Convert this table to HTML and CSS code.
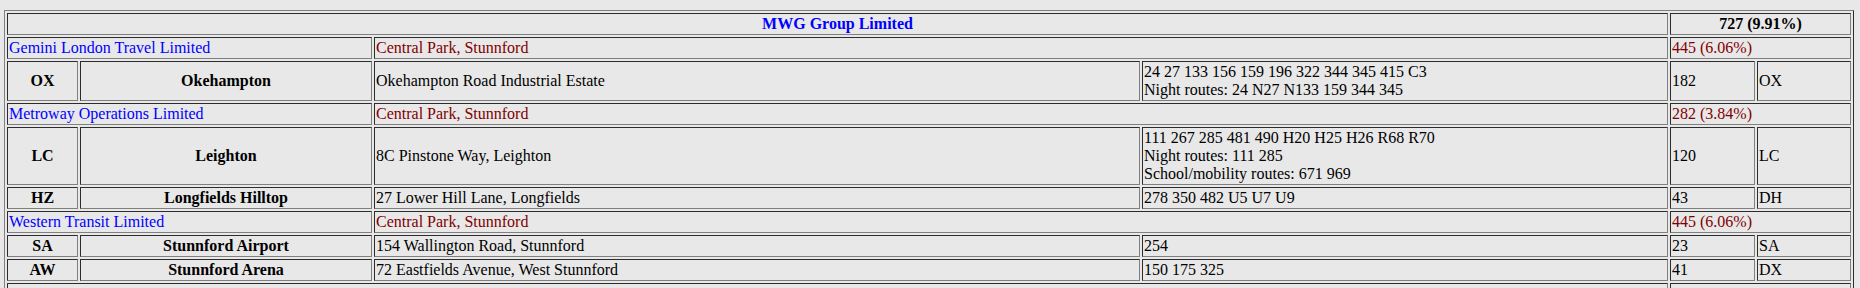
FILE: index.html
```html
<!DOCTYPE html>
<html>
<head>
<meta charset="utf-8">
<title>MWG Group Limited</title>
<link rel="stylesheet" href="styles.css">
</head>
<body>
<table class="garages">
  <colgroup>
    <col class="c-code">
    <col class="c-name">
    <col class="c-addr">
    <col class="c-routes">
    <col class="c-count">
    <col class="c-ref">
  </colgroup>
  <tbody>
    <tr>
      <td colspan="4" class="group-name">MWG Group Limited</td>
      <td colspan="2" class="group-total">727 (9.91%)</td>
    </tr>
    <tr>
      <td colspan="2" class="op-name">Gemini London Travel Limited</td>
      <td colspan="2" class="op-addr">Central Park, Stunnford</td>
      <td colspan="2" class="op-addr">445 (6.06%)</td>
    </tr>
    <tr>
      <td class="code">OX</td>
      <td class="name">Okehampton</td>
      <td>Okehampton Road Industrial Estate</td>
      <td>24 27 133 156 159 196 322 344 345 415 C3<br>Night routes: 24 N27 N133 159 344 345</td>
      <td>182</td>
      <td>OX</td>
    </tr>
    <tr>
      <td colspan="2" class="op-name">Metroway Operations Limited</td>
      <td colspan="2" class="op-addr">Central Park, Stunnford</td>
      <td colspan="2" class="op-addr">282 (3.84%)</td>
    </tr>
    <tr>
      <td class="code">LC</td>
      <td class="name">Leighton</td>
      <td>8C Pinstone Way, Leighton</td>
      <td>111 267 285 481 490 H20 H25 H26 R68 R70<br>Night routes: 111 285<br>School/mobility routes: 671 969</td>
      <td>120</td>
      <td>LC</td>
    </tr>
    <tr>
      <td class="code">HZ</td>
      <td class="name">Longfields Hilltop</td>
      <td>27 Lower Hill Lane, Longfields</td>
      <td>278 350 482 U5 U7 U9</td>
      <td>43</td>
      <td>DH</td>
    </tr>
    <tr>
      <td colspan="2" class="op-name">Western Transit Limited</td>
      <td colspan="2" class="op-addr">Central Park, Stunnford</td>
      <td colspan="2" class="op-addr">445 (6.06%)</td>
    </tr>
    <tr>
      <td class="code">SA</td>
      <td class="name">Stunnford Airport</td>
      <td>154 Wallington Road, Stunnford</td>
      <td>254</td>
      <td>23</td>
      <td>SA</td>
    </tr>
    <tr>
      <td class="code">AW</td>
      <td class="name">Stunnford Arena</td>
      <td>72 Eastfields Avenue, West Stunnford</td>
      <td>150 175 325</td>
      <td>41</td>
      <td>DX</td>
    </tr>
    <tr>
      <td colspan="4" class="group-name">&nbsp;</td>
      <td colspan="2" class="group-total">&nbsp;</td>
    </tr>
  </tbody>
</table>
</body>
</html>
```

FILE: styles.css
```css
html, body {
  background: #e8e8e8;
}

body {
  margin: 10px 0 0 4px;
  font-family: "Liberation Serif", "Times New Roman", serif;
  font-size: 16px;
  color: #000;
}

.garages {
  width: 1850px;
  table-layout: fixed;
  border: 1px outset grey;
  border-spacing: 2px;
  border-collapse: separate;
}

.garages td {
  border: 1px inset grey;
  padding: 1px;
  vertical-align: middle;
  text-align: left;
  white-space: nowrap;
  overflow: hidden;
}

.c-code { width: 71px; }
.c-name { width: 292px; }
.c-addr { width: 766px; }
.c-routes { width: 526px; }
.c-count { width: 85px; }
.c-ref { width: 94px; }

.garages td.group-name {
  color: #0000ff;
  font-weight: bold;
  text-align: center;
}

.garages td.group-total {
  font-weight: bold;
  text-align: center;
}

.op-name {
  color: #0000ff;
}

.op-addr {
  color: #800000;
}

.garages td.code,
.garages td.name {
  font-weight: bold;
  text-align: center;
}
```
